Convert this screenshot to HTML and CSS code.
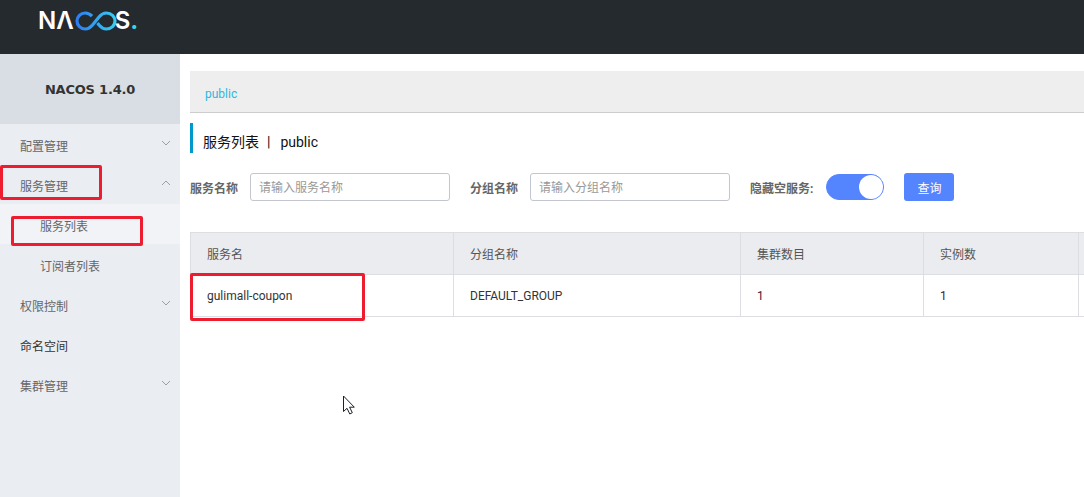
FILE: index.html
```html
<!DOCTYPE html>
<html lang="zh">
<head>
<meta charset="utf-8">
<title>Nacos</title>
<link rel="stylesheet" href="styles.css">
</head>
<body>
<header class="topbar">
  <div class="logo">
    <span class="logo-letter">N</span><span class="logo-letter logo-a">Λ</span>
    <svg class="logo-loop" width="42" height="20" viewBox="0 0 42 20">
      <defs>
        <linearGradient id="loop" x1="0" x2="1" y1="0" y2="0">
          <stop offset="0" stop-color="#2f7cf0"/>
          <stop offset="1" stop-color="#36cdf0"/>
        </linearGradient>
      </defs>
      <path d="M17 5.200C15 3 12.800 2 10.200 2 5.600 2 2 5.500 2 10s3.600 8 8.200 8c2.800 0 5-1.300 7.300-4l6.500-8c2.200-2.700 4.500-4 7.300-4C36.400 2 40 5.500 40 10s-3.600 8-8.700 8c-2.800 0-5-1.300-7.300-4l-1.500-2" fill="none" stroke="url(#loop)" stroke-width="3.200"/>
    </svg>
    <span class="logo-letter logo-s">S</span><span class="logo-dot">.</span>
  </div>
</header>
<div class="shell">
  <aside class="sidebar">
    <div class="version">NACOS 1.4.0</div>
    <nav class="menu">
      <div class="menu-item"><span>配置管理</span><svg class="chev" width="10" height="6" viewBox="0 0 10 6"><path d="M1 1l4 4 4-4" fill="none" stroke="#9aa0a8"/></svg></div>
      <div class="menu-item"><span>服务管理</span><svg class="chev" width="10" height="6" viewBox="0 0 10 6"><path d="M1 5l4-4 4 4" fill="none" stroke="#9aa0a8"/></svg></div>
      <div class="sub-item sub-active">服务列表</div>
      <div class="sub-item">订阅者列表</div>
      <div class="menu-item"><span>权限控制</span><svg class="chev" width="10" height="6" viewBox="0 0 10 6"><path d="M1 1l4 4 4-4" fill="none" stroke="#9aa0a8"/></svg></div>
      <div class="menu-item menu-dark"><span>命名空间</span></div>
      <div class="menu-item"><span>集群管理</span><svg class="chev" width="10" height="6" viewBox="0 0 10 6"><path d="M1 1l4 4 4-4" fill="none" stroke="#9aa0a8"/></svg></div>
    </nav>
  </aside>
  <main class="content">
    <div class="crumb">public</div>
    <h1 class="title">服务列表<span class="sep">|</span>public</h1>
    <div class="filters">
      <label class="f-label">服务名称</label>
      <input class="f-input" placeholder="请输入服务名称">
      <label class="f-label f-next">分组名称</label>
      <input class="f-input" placeholder="请输入分组名称">
      <label class="f-label f-next">隐藏空服务:</label>
      <span class="switch"><span class="knob"></span></span>
      <button class="query">查询</button>
    </div>
    <div class="table">
      <div class="cell head c1">服务名</div>
      <div class="cell head c2">分组名称</div>
      <div class="cell head c3">集群数目</div>
      <div class="cell head c4">实例数</div>
      <div class="cell head c5"></div>
      <div class="cell c1">gulimall-coupon</div>
      <div class="cell c2">DEFAULT_GROUP</div>
      <div class="cell c3 num">1</div>
      <div class="cell c4 num">1</div>
      <div class="cell c5"></div>
    </div>
  </main>
</div>
<div class="mark mark-a"></div>
<div class="mark mark-b"></div>
<div class="mark mark-c"></div>
<svg class="cursor" width="14" height="20" viewBox="0 0 14 20"><path d="M1.500 1v15.500l3.500-3.200 2.800 5.700 2.500-1.300-2.700-5.500h4.700z" fill="#fff" stroke="#1b1f24"/></svg>
</body>
</html>
```

FILE: styles.css
```css
* { box-sizing: border-box; }
html, body { margin: 0; height: 497px; overflow: hidden; background: #fff; }
body { position: relative; font-family: Roboto, "Noto Sans CJK SC", sans-serif; font-size: 12px; color: #333; }

.topbar { height: 54px; background: #252a2f; padding: 6px 0 0 38px; }
.logo { display: flex; align-items: center; height: 30px; color: #fff; }
.logo-letter { font-family: "Inter", "Liberation Sans", sans-serif; font-size: 24px; line-height: 30px; font-weight: 600; }
.logo-loop { margin: 0 -2px 0 1px; }
.logo-dot { color: #36d6e8; font-size: 24px; line-height: 30px; font-weight: 700; font-family: "Inter", sans-serif; }

.shell { display: flex; height: 443px; }
.sidebar { width: 180px; flex: none; background: #eaedf2; }
.version { height: 70px; background: #d9dee4; display: flex; align-items: center; justify-content: center; font-family: "DejaVu Sans", sans-serif; font-weight: 700; font-size: 13px; letter-spacing: -0.2px; color: #333; }
.menu-item { height: 40px; padding: 0 9px 0 20px; display: flex; justify-content: space-between; align-items: center; color: #666; }
.menu-item span { position: relative; top: 1px; }
.menu-dark { color: #333; }
.chev { position: relative; top: -1px; }
.sub-item { height: 40px; padding: 3px 0 0 40px; display: flex; align-items: center; color: #666; }
.sub-active { background: #f2f3f7; }

.content { flex: 1; min-width: 0; padding: 17px 0 0 10px; overflow: hidden; }
.crumb { height: 42px; background: #eee; border-bottom: 1px solid #ccc; padding: 0 15px; line-height: 46px; color: #2fb7dc; }
.title { margin: 10px 0 0; height: 30px; border-left: 3px solid #09c; padding-left: 10px; font-size: 14px; line-height: 38px; font-weight: 400; color: #111; }
.sep { margin: 0 10px 0 8px; }
.filters { margin-top: 20px; height: 28px; display: flex; align-items: center; }
.f-label { font-weight: 700; color: #666; white-space: nowrap; }
.f-next { margin-left: 20px; }
.f-input { width: 200px; height: 28px; margin-left: 12px; padding: 2px 8px 0; border: 1px solid #c4c6cf; border-radius: 3px; background: #fff; font: inherit; color: #333; outline: none; }
.f-input::placeholder { color: #999; }
.switch { width: 58px; height: 26px; margin-left: 13px; border-radius: 13px; background: #5584ff; border: 1px solid #5584ff; display: flex; justify-content: flex-end; }
.knob { width: 24px; height: 24px; border-radius: 50%; background: #fff; }
.query { width: 50px; height: 28px; margin-left: 20px; border: 0; border-radius: 3px; background: #5584ff; color: #fff; font: inherit; padding: 0; }

.table { margin-top: 31px; width: 960px; display: grid; grid-template-columns: 263px 287px 183px 155px 72px; grid-template-rows: 42px 42px; border-top: 1px solid #dcdee3; }
.cell { border-left: 1px solid #dcdee3; border-bottom: 1px solid #dcdee3; padding: 0 16px; display: flex; align-items: center; white-space: nowrap; color: #333; }
.head { background: #ebecf0; color: #555; }
.num { color: #4a1430; }

.mark { position: absolute; border: 3px solid #ed1c2e; border-radius: 2px; }
.mark-a { left: 0; top: 165px; width: 102px; height: 35px; }
.mark-b { left: 11px; top: 216px; width: 132px; height: 30px; }
.mark-c { left: 190px; top: 273px; width: 175px; height: 48px; }
.cursor { position: absolute; left: 342px; top: 395px; }
```
